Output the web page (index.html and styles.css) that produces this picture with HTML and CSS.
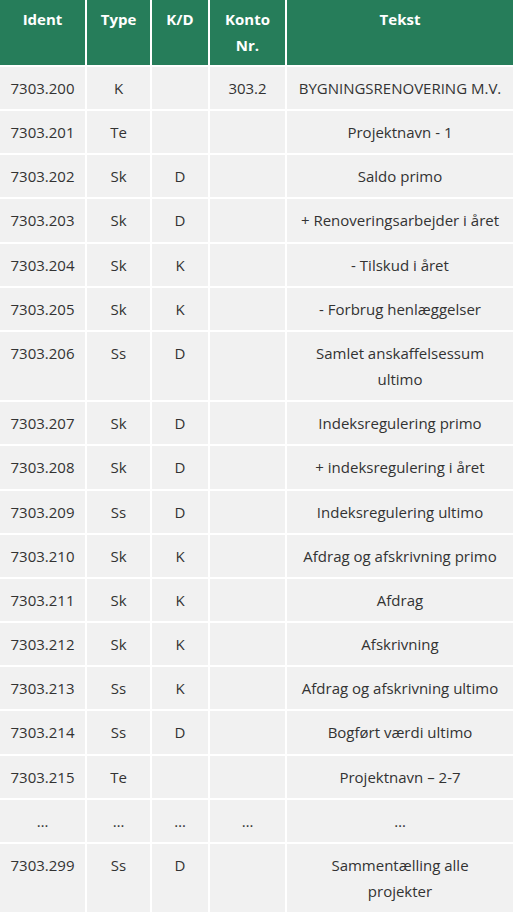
FILE: index.html
```html
<!DOCTYPE html>
<html>
<head>
<meta charset="utf-8">
<link rel="stylesheet" href="styles.css">
</head>
<body>
<table class="tbl">
<colgroup>
<col class="c1"><col class="c2"><col class="c3"><col class="c4"><col class="c5">
</colgroup>
<thead>
<tr><th>Ident</th><th>Type</th><th>K/D</th><th>Konto Nr.</th><th class="last">Tekst</th></tr>
</thead>
<tbody>
<tr><td>7303.200</td><td>K</td><td></td><td>303.2</td><td class="last nowrap">BYGNINGSRENOVERING M.V.</td></tr>
<tr><td>7303.201</td><td>Te</td><td></td><td></td><td class="last">Projektnavn - 1</td></tr>
<tr><td>7303.202</td><td>Sk</td><td>D</td><td></td><td class="last">Saldo primo</td></tr>
<tr><td>7303.203</td><td>Sk</td><td>D</td><td></td><td class="last">+ Renoveringsarbejder i året</td></tr>
<tr><td>7303.204</td><td>Sk</td><td>K</td><td></td><td class="last">- Tilskud i året</td></tr>
<tr><td>7303.205</td><td>Sk</td><td>K</td><td></td><td class="last">- Forbrug henlæggelser</td></tr>
<tr><td>7303.206</td><td>Ss</td><td>D</td><td></td><td class="last">Samlet anskaffelsessum ultimo</td></tr>
<tr><td>7303.207</td><td>Sk</td><td>D</td><td></td><td class="last">Indeksregulering primo</td></tr>
<tr><td>7303.208</td><td>Sk</td><td>D</td><td></td><td class="last">+ indeksregulering i året</td></tr>
<tr><td>7303.209</td><td>Ss</td><td>D</td><td></td><td class="last">Indeksregulering ultimo</td></tr>
<tr><td>7303.210</td><td>Sk</td><td>K</td><td></td><td class="last">Afdrag og afskrivning primo</td></tr>
<tr><td>7303.211</td><td>Sk</td><td>K</td><td></td><td class="last">Afdrag</td></tr>
<tr><td>7303.212</td><td>Sk</td><td>K</td><td></td><td class="last">Afskrivning</td></tr>
<tr><td>7303.213</td><td>Ss</td><td>K</td><td></td><td class="last">Afdrag og afskrivning ultimo</td></tr>
<tr><td>7303.214</td><td>Ss</td><td>D</td><td></td><td class="last">Bogført værdi ultimo</td></tr>
<tr><td>7303.215</td><td>Te</td><td></td><td></td><td class="last">Projektnavn – 2-7</td></tr>
<tr><td>…</td><td>…</td><td>…</td><td>…</td><td class="last">…</td></tr>
<tr><td>7303.299</td><td>Ss</td><td>D</td><td></td><td class="last">Sammentælling alle projekter</td></tr>
</tbody>
</table>
</body>
</html>
```

FILE: styles.css
```css
html, body {
  margin: 0;
  padding: 0;
  background: #ffffff;
}
.tbl {
  width: 513px;
  table-layout: fixed;
  border-collapse: separate;
  border-spacing: 0;
  font-family: "Open Sans", "DejaVu Sans", sans-serif;
  font-size: 15px;
}
.c1 { width: 87px; }
.c2 { width: 65px; }
.c3 { width: 58px; }
.c4 { width: 77px; }
.c5 { width: 226px; }
.tbl th {
  background: #267d5a;
  color: #ffffff;
  font-weight: 700;
  line-height: 26px;
  padding: 6px 4px 7px;
  vertical-align: top;
  text-align: center;
  border-right: 2px solid #ffffff;
  border-bottom: 2px solid #ffffff;
}
.tbl td {
  background: #f1f1f1;
  color: #333333;
  line-height: 26.15px;
  padding: 8px 4px;
  vertical-align: top;
  text-align: center;
  border-right: 2px solid #ffffff;
  border-bottom: 2px solid #ffffff;
}
.tbl .last {
  border-right: none;
  padding-left: 12px;
  padding-right: 12px;
}
.tbl .nowrap {
  white-space: nowrap;
  padding-left: 0;
  padding-right: 0;
}
```
